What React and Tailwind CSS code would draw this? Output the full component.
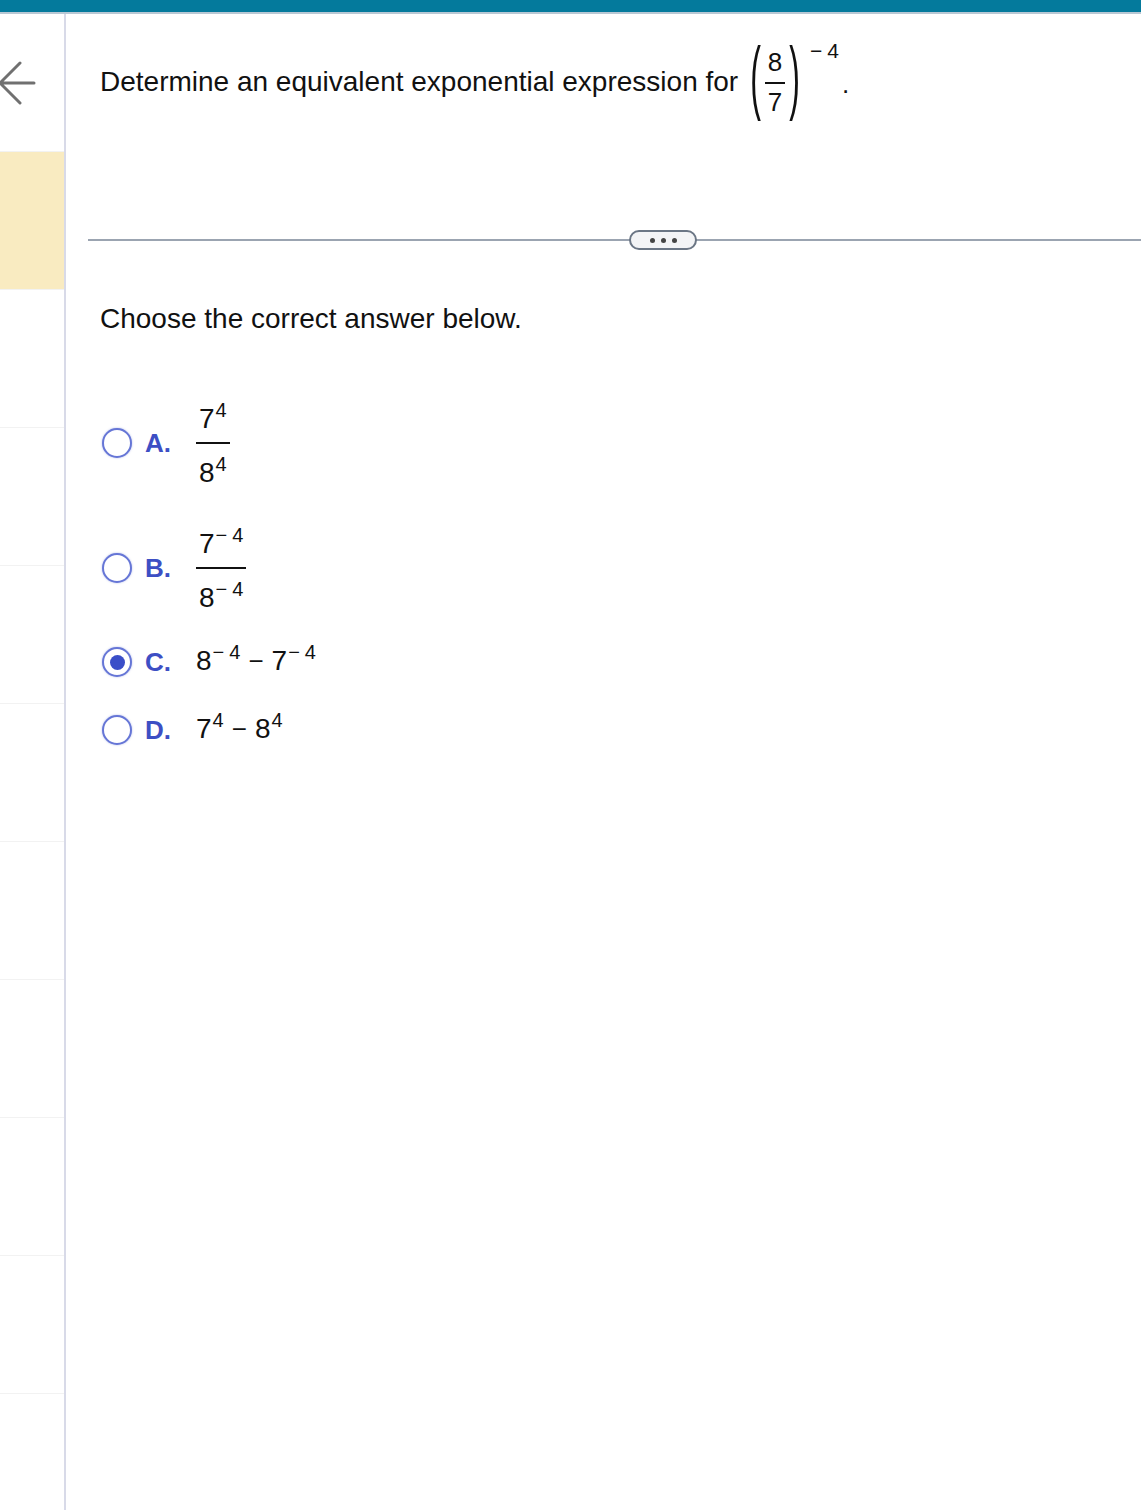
import React from "react";

const font = { fontFamily: '"Liberation Sans", Arial, sans-serif' };

function Radio({ checked }) {
  return (
    <span className="flex h-[30px] w-[30px] items-center justify-center rounded-full border-2 border-[#6676d6] bg-white shadow-[0_0_2px_rgba(90,110,210,0.5)]">
      {checked && <span className="h-[15px] w-[15px] rounded-full bg-[#3a4ec8]" />}
    </span>
  );
}

function Pow({ base, exp, neg }) {
  return (
    <span className="inline-flex items-start leading-none">
      <span className="text-[28px] leading-none">{base}</span>
      <span className="-mt-[5px] ml-[1px] flex text-[20px] leading-none">
        {neg && <span className="mr-[5px]">{"\u2212"}</span>}
        <span>{exp}</span>
      </span>
    </span>
  );
}

function Frac({ top, bottom }) {
  return (
    <span className="inline-flex flex-col items-stretch">
      <span className="flex justify-center px-[3px] pb-[9px] pt-[5px]">{top}</span>
      <span className="h-[2px] bg-[#111]" />
      <span className="flex justify-center px-[3px] pt-[15px]">{bottom}</span>
    </span>
  );
}

function Option({ letter, checked, children, className }) {
  return (
    <div className={"flex items-center " + className}>
      <Radio checked={checked} />
      <span className="ml-[13px] w-[51px] text-[26px] font-bold text-[#3d4fc4]">{letter}</span>
      <div className="text-[#111]">{children}</div>
    </div>
  );
}

function Minus() {
  return <span className="mx-[8px] text-[26px] leading-none">{"\u2212"}</span>;
}

export default function App() {
  const rows = [0, 1, 2, 3, 4, 5, 6, 7, 8, 9, 10];
  return (
    <div className="flex min-h-[1510px] flex-col bg-white text-[#111]" style={font}>
      <div className="h-[12px] bg-[#047a9c]" />
      <div className="h-[2px] bg-[#b9c8d4]" />

      <div className="flex flex-1">
        {/* sidebar */}
        <div className="w-[66px] shrink-0 border-r-2 border-[#d8dae8]">
          {rows.map((i) => (
            <div
              key={i}
              className={
                "flex h-[138px] items-center border-b border-[#f2f2f2] " +
                (i === 1 ? "bg-[#f9ebc1]" : "")
              }
            >
              {i === 0 && (
                <svg width="38" height="46" viewBox="0 0 38 46" className="-ml-[2px]">
                  <path
                    d="M2 23 H36 M2 23 L22 3 M2 23 L22 43"
                    fill="none"
                    stroke="#707070"
                    strokeWidth="3"
                    strokeLinecap="round"
                  />
                </svg>
              )}
            </div>
          ))}
        </div>

        {/* main */}
        <div className="flex-1">
          <div className="flex h-[136px] items-center pl-[34px]">
            <span className="text-[28px] leading-none">Determine an equivalent exponential expression for</span>
            <span className="ml-[12px] inline-flex items-stretch">
              <span className="mb-[13px] inline-block self-center scale-y-[2.55] text-[32px] leading-none">(</span>
              <span className="mx-[4px] inline-flex flex-col items-stretch text-[26px] leading-none">
                <span className="px-[3px] pb-[7px] text-center">8</span>
                <span className="h-[2px] bg-[#111]" />
                <span className="px-[3px] pt-[5px] text-center">7</span>
              </span>
              <span className="mb-[13px] inline-block self-center scale-y-[2.55] text-[32px] leading-none">)</span>
              <span className="-mt-[9px] ml-[10px] flex self-start text-[21px] leading-none">
                <span className="mr-[5px]">{"\u2212"}</span>
                <span>4</span>
              </span>
              <span className="ml-[3px] mt-[22px] self-start text-[26px] leading-none">.</span>
            </span>
          </div>

          <div className="relative ml-[22px] mt-[89px] h-[2px] bg-[#9ba4b1]">
            <div className="absolute left-[541px] top-[-9px] flex h-[20px] w-[68px] items-center justify-center gap-[6px] rounded-full border-2 border-[#6b7685] bg-[#f3f4f6]">
              <span className="h-[5px] w-[5px] rounded-full bg-[#444]" />
              <span className="h-[5px] w-[5px] rounded-full bg-[#444]" />
              <span className="h-[5px] w-[5px] rounded-full bg-[#444]" />
            </div>
          </div>

          <div className="pl-[34px]">
            <p className="mt-[62px] h-[32px] text-[28px] leading-[32px]">Choose the correct answer below.</p>

            <Option letter="A." className="mt-[60px] h-[96px] pl-[2px]">
              <Frac top={<Pow base="7" exp="4" />} bottom={<Pow base="8" exp="4" />} />
            </Option>

            <Option letter="B." className="mt-[29px] h-[96px] pl-[2px]">
              <Frac top={<Pow base="7" exp="4" neg />} bottom={<Pow base="8" exp="4" neg />} />
            </Option>

            <Option letter="C." checked className="mt-[22px] h-[48px] pl-[2px]">
              <span className="inline-flex items-baseline">
                <Pow base="8" exp="4" neg />
                <Minus />
                <Pow base="7" exp="4" neg />
              </span>
            </Option>

            <Option letter="D." className="mt-[20px] h-[48px] pl-[2px]">
              <span className="inline-flex items-baseline">
                <Pow base="7" exp="4" />
                <Minus />
                <Pow base="8" exp="4" />
              </span>
            </Option>
          </div>
        </div>
      </div>
    </div>
  );
}
